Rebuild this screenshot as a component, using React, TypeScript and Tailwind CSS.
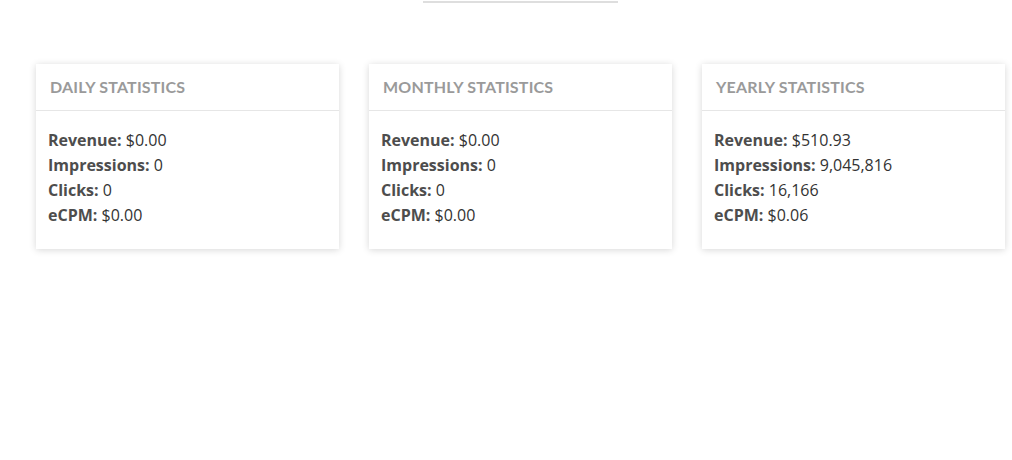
const cards = [
  {
    title: "Daily Statistics",
    rows: [
      ["Revenue:", "$0.00"],
      ["Impressions:", "0"],
      ["Clicks:", "0"],
      ["eCPM:", "$0.00"],
    ],
  },
  {
    title: "Monthly Statistics",
    rows: [
      ["Revenue:", "$0.00"],
      ["Impressions:", "0"],
      ["Clicks:", "0"],
      ["eCPM:", "$0.00"],
    ],
  },
  {
    title: "Yearly Statistics",
    rows: [
      ["Revenue:", "$510.93"],
      ["Impressions:", "9,045,816"],
      ["Clicks:", "16,166"],
      ["eCPM:", "$0.06"],
    ],
  },
];

export default function App() {
  return (
    <div className="h-[460px] w-[1012px] bg-white font-['Open_Sans',sans-serif]">
      <div className="flex justify-center pt-px">
        <div className="ml-[29px] h-[2px] w-[195px] bg-[#dedede]" />
      </div>
      <div className="mt-[61px] grid grid-cols-3 gap-[30px] pl-[36px] pr-[7px]">
        {cards.map((card) => (
          <div key={card.title} className="bg-white shadow-[0_1px_7px_rgba(0,0,0,0.16)]">
            <div className="flex h-[47px] items-center border-b border-[#e6e6e6] px-[14px]">
              <h3 className="font-['Lato',sans-serif] text-[16px] font-bold uppercase tracking-[0.2px] text-[#9a9a9a]">
                {card.title}
              </h3>
            </div>
            <div className="px-[12px] pb-[21px] pt-[17px] text-[16px] leading-[25px] text-[#333]">
              {card.rows.map(([label, value]) => (
                <div key={label}>
                  <span className="font-bold text-[#4d4d4d]">{label}</span> {value}
                </div>
              ))}
            </div>
          </div>
        ))}
      </div>
    </div>
  );
}
